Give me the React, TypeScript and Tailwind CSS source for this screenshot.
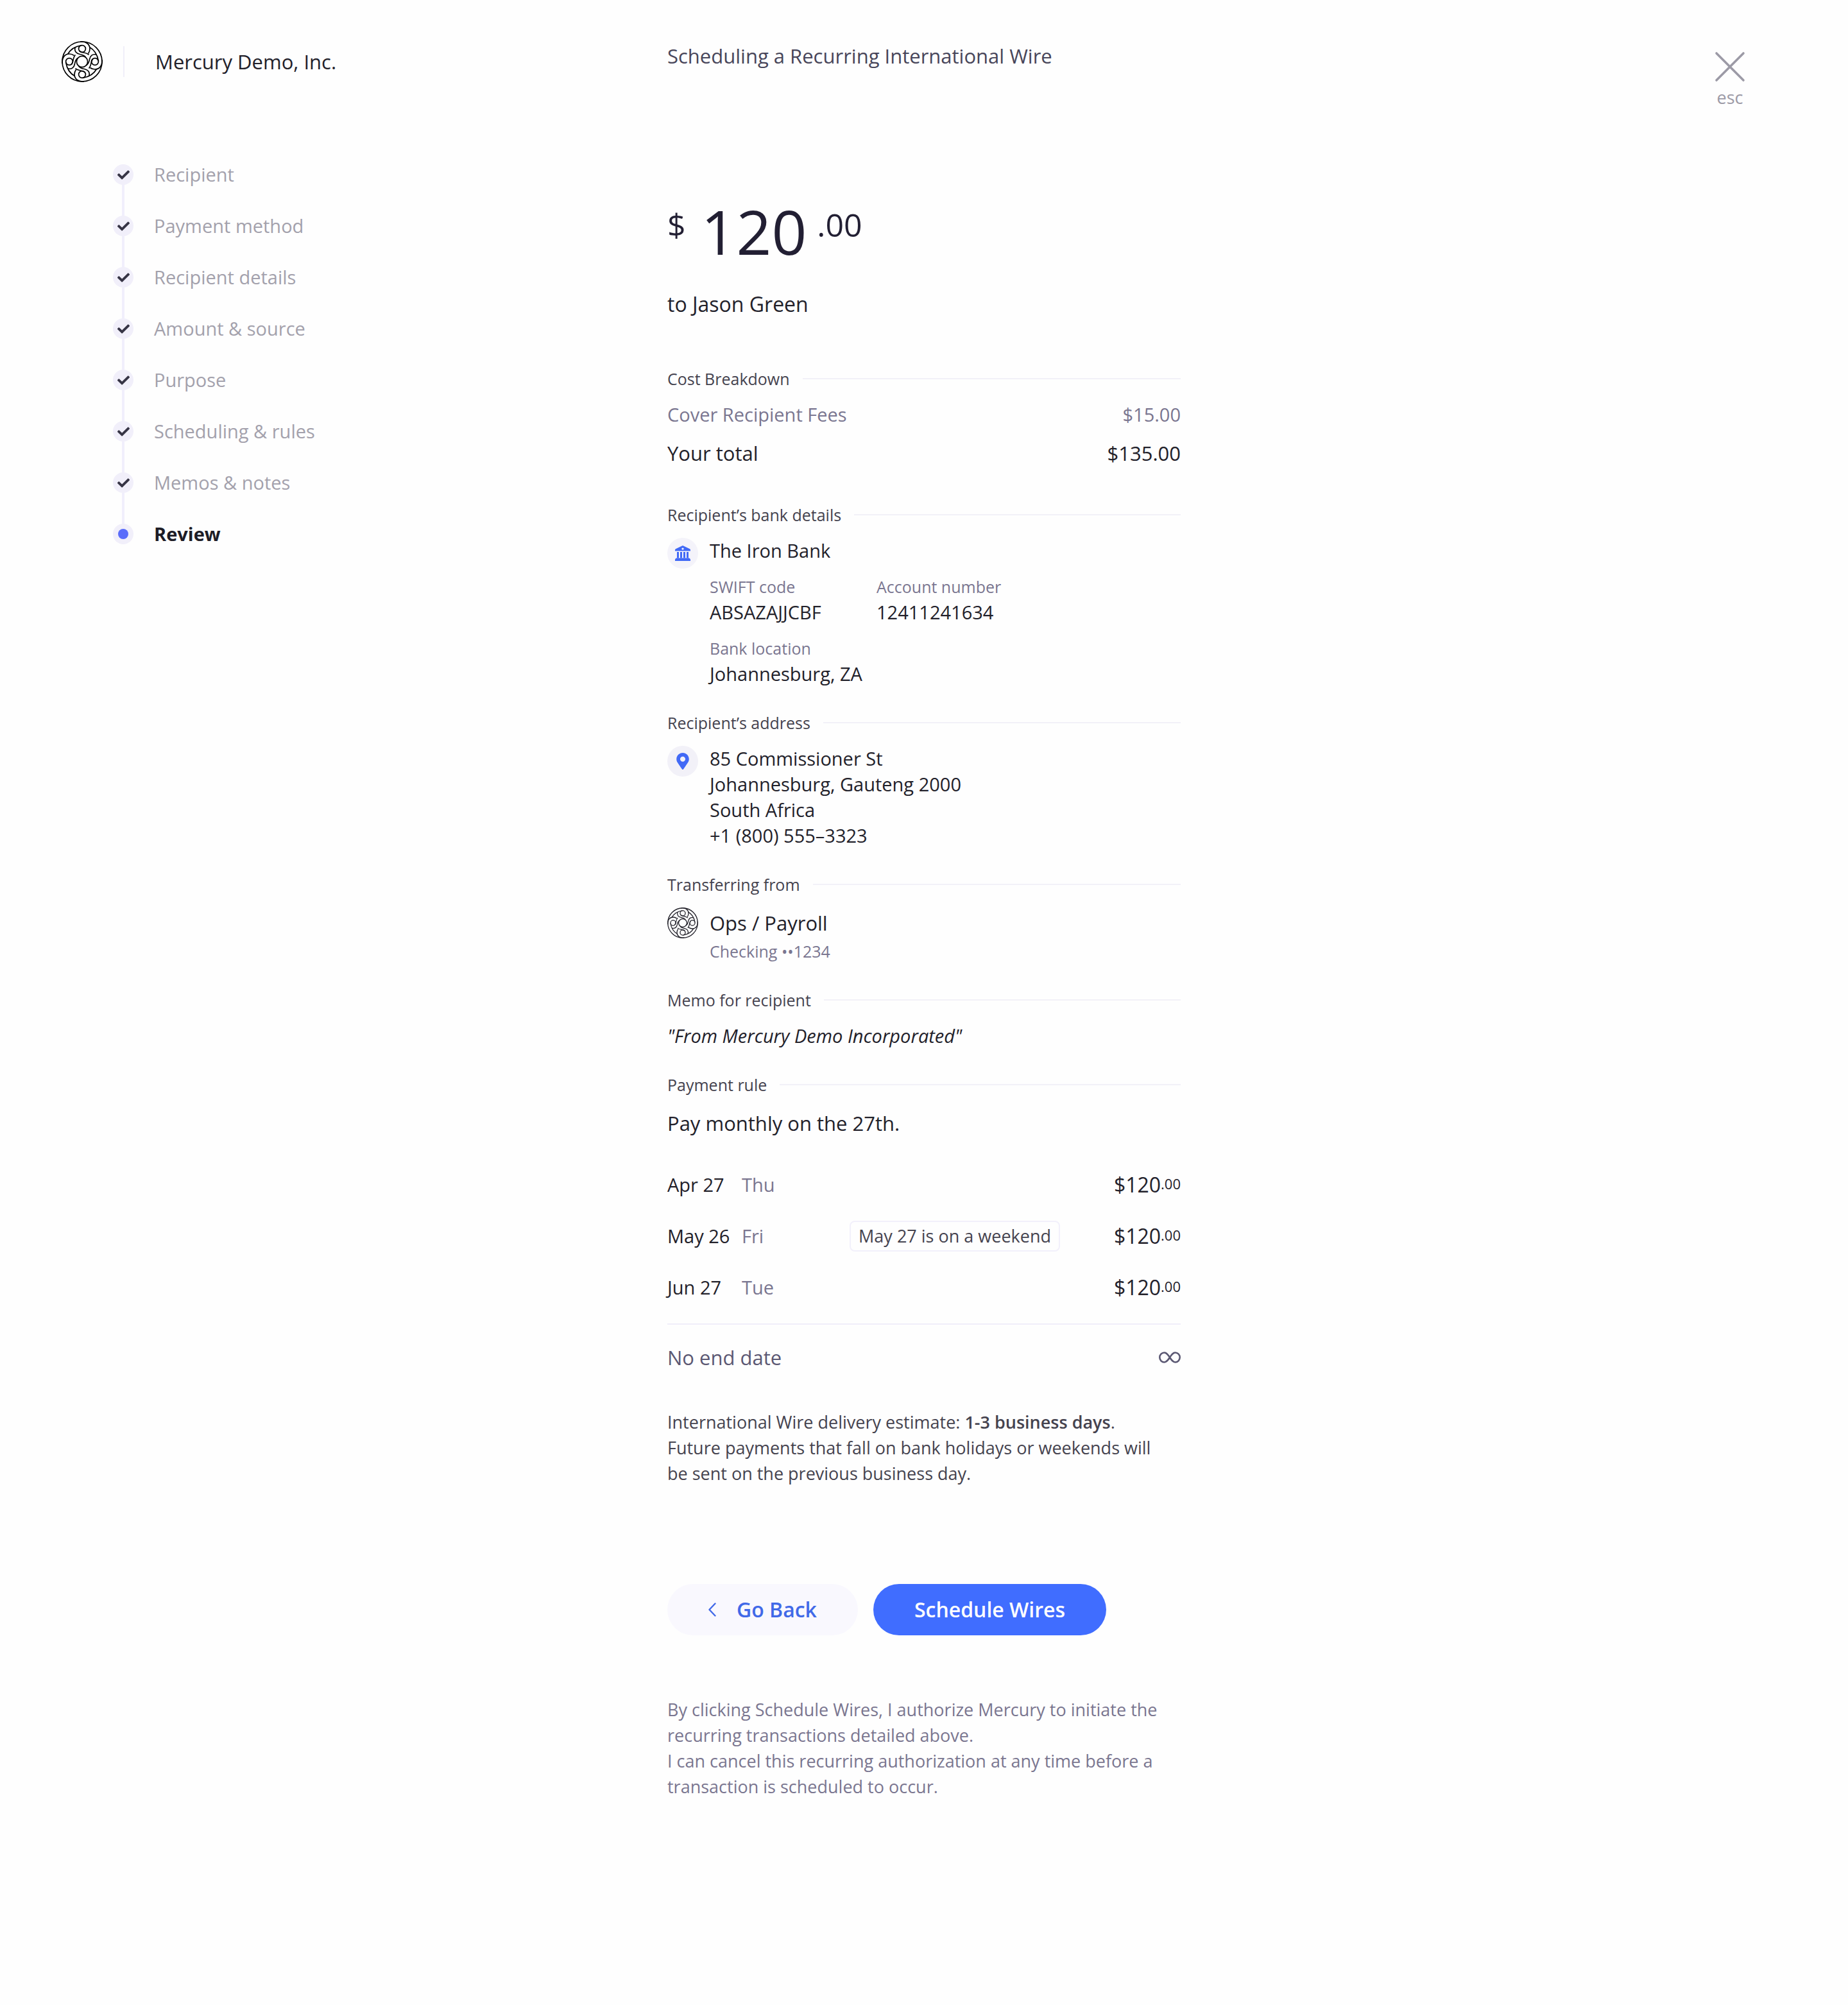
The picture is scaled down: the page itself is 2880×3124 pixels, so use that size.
import type { ReactNode } from "react";
import { FaCheck, FaMapMarkerAlt } from "react-icons/fa";

const STEPS = [
  "Recipient",
  "Payment method",
  "Recipient details",
  "Amount & source",
  "Purpose",
  "Scheduling & rules",
  "Memos & notes",
  "Review",
];

const PAYMENTS = [
  { date: "Apr 27", day: "Thu", note: "" },
  { date: "May 26", day: "Fri", note: "May 27 is on a weekend" },
  { date: "Jun 27", day: "Tue", note: "" },
];

/** Interlaced knot, one strand drawn four times around the centre. */
function Logo({ className }: { className: string }) {
  return (
    <svg viewBox="-32 -32 64 64" fill="none" stroke="currentColor" strokeWidth="1.7" className={className} aria-hidden="true">
      <circle r="31" />
      <circle r="8.6" />
      {[0, 90, 180, 270].map((angle) => (
        <g key={angle} transform={`rotate(${angle})`}>
          <circle cy="-20" r="5.4" />
          <path d="M-3 -31C6 -32 12 -27 12 -20C12 -17 11 -14.5 9.5 -12.5" />
          <path d="M11.5 -22.5C18 -19 23.5 -12 25.4 -1" />
          <path d="M-10.8 -22.8C-12.5 -16 -9 -12.5 -3.5 -11.5C0 -11 3 -10 5.5 -7" />
          <path d="M-4.5 -17C-1 -13 6 -15 10.5 -10.5" />
        </g>
      ))}
    </svg>
  );
}

function BankIcon() {
  return (
    <svg viewBox="0 0 24 24" className="size-6" fill="currentColor" aria-hidden="true">
      <path fillRule="evenodd" d="M12 0L23 5.2Q24 6 24 7V8.5H0V7Q0 6 1 5.2ZM12 3.4A1.7 1.7 0 1 0 12 6.8A1.7 1.7 0 1 0 12 3.4Z" />
      <path d="M3 10H6V19.5H3ZM8 10H11V19.5H8ZM13 10H16V19.5H13ZM18 10H21V19.5H18Z" />
      <path d="M2 19.5H22Q24 20.5 24 22V24H0V22Q0 20.5 2 19.5Z" />
    </svg>
  );
}

function Section({ title, children }: { title: string; children: ReactNode }) {
  return (
    <section className="mt-9">
      <div className="mb-4 flex items-center gap-5">
        <h2 className="text-[25px] leading-10 text-[#45434f]">{title}</h2>
        <div className="h-[2px] flex-1 bg-[#f2f1f8]" />
      </div>
      {children}
    </section>
  );
}

function Field({ label, value }: { label: string; value: string }) {
  return (
    <div>
      <dt className="text-[25px] leading-10 text-[#7a7690]">{label}</dt>
      <dd className="leading-10">{value}</dd>
    </div>
  );
}

function StepList() {
  return (
    <ol className="mt-[124px] ml-20 text-[#a3a1ac]">
      {STEPS.map((step, i) => {
        const current = i === STEPS.length - 1;
        return (
          <li key={step} className="flex h-20 gap-8" aria-current={current ? "step" : undefined}>
            <div className="flex w-8 flex-col items-center">
              <span className="mt-1 flex size-8 shrink-0 items-center justify-center rounded-full bg-[#f1effa]">
                {current ? (
                  <span className="size-4 rounded-full bg-[#5a6cfa]" />
                ) : (
                  <FaCheck className="size-[19px] text-[#363445]" />
                )}
              </span>
              {!current && <span className="-mb-1 w-1 flex-1 bg-[#f1effc]" />}
            </div>
            <span className={current ? "leading-10 font-bold text-[#1d1c26]" : "leading-10"}>{step}</span>
          </li>
        );
      })}
    </ol>
  );
}

export default function App() {
  return (
    <div className="grid min-h-screen grid-cols-[1fr_minmax(0,800px)_1fr] bg-[#fefefe] pb-[320px] font-['Open_Sans','Lato',sans-serif] text-[29px] text-[#22212a]">
      <aside className="pt-16 pl-24">
        <div className="flex h-16 items-center">
          <Logo className="size-16 text-black" />
          <div className="ml-8 h-12 w-[2px] bg-[#f0eff9]" />
          <span className="ml-12 text-[31px]">Mercury Demo, Inc.</span>
        </div>
        <nav aria-label="Progress">
          <StepList />
        </nav>
      </aside>

      <main className="pt-[67px]">
        <h1 className="text-[31px] leading-10 text-[#48465a]">Scheduling a Recurring International Wire</h1>

        <div className="mt-[205px] flex items-start text-[#221f33]">
          <span className="mt-[10px] text-[50px] leading-14">$</span>
          <span className="ml-6 text-[96px] leading-24 font-medium">120</span>
          <span className="mt-[10px] ml-4 text-[50px] leading-14">.00</span>
        </div>
        <p className="mt-[46px] mb-[76px] text-[32px] leading-10">to Jason Green</p>

        <Section title="Cost Breakdown">
          <dl className="mb-14 flex flex-col gap-5 leading-10">
            <div className="flex justify-between text-[#7a7690]">
              <dt>Cover Recipient Fees</dt>
              <dd>$15.00</dd>
            </div>
            <div className="flex justify-between text-[31px]">
              <dt>Your total</dt>
              <dd>$135.00</dd>
            </div>
          </dl>
        </Section>

        <Section title="Recipient’s bank details">
          <div className="flex gap-[18px]">
            <span className="flex size-12 items-center justify-center rounded-full bg-[#f4f3fa] text-[#4169f6]">
              <BankIcon />
            </span>
            <div>
              <p className="leading-10">The Iron Bank</p>
              <dl className="mt-4 grid grid-cols-[200px_auto] gap-x-15 gap-y-4">
                <Field label="SWIFT code" value="ABSAZAJJCBF" />
                <Field label="Account number" value="12411241634" />
                <div className="col-span-2">
                  <Field label="Bank location" value="Johannesburg, ZA" />
                </div>
              </dl>
            </div>
          </div>
        </Section>

        <Section title="Recipient’s address">
          <div className="flex gap-[18px]">
            <span className="flex size-12 items-center justify-center rounded-full bg-[#f2f1f8] text-[#4169f6]">
              <FaMapMarkerAlt className="size-[26px]" />
            </span>
            <address className="leading-10 not-italic">
              85 Commissioner St
              <br />
              Johannesburg, Gauteng 2000
              <br />
              South Africa
              <br />
              +1 (800) 555–3323
            </address>
          </div>
        </Section>

        <Section title="Transferring from">
          <div className="flex gap-[18px]">
            <Logo className="size-12" />
            <div>
              <p className="text-[31px] leading-12">Ops / Payroll</p>
              <p className="text-[25px] leading-10 text-[#7a7690]">Checking ••1234</p>
            </div>
          </div>
        </Section>

        <Section title="Memo for recipient">
          <p className="leading-10 italic">"From Mercury Demo Incorporated"</p>
        </Section>

        <Section title="Payment rule">
          <p className="text-[31px] leading-12">Pay monthly on the 27th.</p>
          <table className="mt-8 w-full">
            <tbody>
              {PAYMENTS.map(({ date, day, note }) => (
                <tr key={date} className="h-20">
                  <td className="w-[116px]">{date}</td>
                  <td className="text-[#7a7690]">{day}</td>
                  <td className="text-right">
                    {note && (
                      <span className="inline-block h-12 rounded-lg border-2 border-[#f2f0fb] px-3 text-[27px] leading-11 text-[#45434f]">
                        {note}
                      </span>
                    )}
                  </td>
                  <td className="w-[188px]">
                    <div className="flex items-start justify-end text-[32px] leading-10">
                      $120<span className="text-[22px] leading-9">.00</span>
                    </div>
                  </td>
                </tr>
              ))}
            </tbody>
          </table>
        </Section>

        <div className="mt-4 flex h-[104px] items-center justify-between border-t-2 border-[#f0eefa] text-[31px] text-[#5b5873]">
          <span>No end date</span>
          <svg viewBox="0 0 34 18" className="h-[18px] w-[34px]" fill="none" stroke="currentColor" strokeWidth="2.6" role="img" aria-label="Forever">
            <path d="M17 9C14 4.5 12 1.5 8.5 1.5A7.2 7.5 0 0 0 8.5 16.5C12 16.5 14 13.5 17 9C20 4.5 22 1.5 25.5 1.5A7.2 7.5 0 0 1 25.5 16.5C22 16.5 20 13.5 17 9Z" />
          </svg>
        </div>

        <p className="mt-[30px] max-w-[780px] text-[27px] leading-10 text-[#45434f]">
          International Wire delivery estimate: <strong className="font-semibold">1-3 business days</strong>.
          <br />
          Future payments that fall on bank holidays or weekends will be sent on the previous business day.
        </p>

        <div className="mt-[152px] flex gap-6 text-[32px] font-semibold">
          <button type="button" className="flex h-20 items-center gap-8 rounded-full bg-[#f9f8fe] px-16 text-[#4169e8]">
            <svg viewBox="0 0 12 22" className="h-[22px] w-3" fill="none" stroke="currentColor" strokeWidth="2.4" strokeLinecap="round" strokeLinejoin="round" aria-hidden="true">
              <path d="M10.5 1.5L1.5 11L10.5 20.5" />
            </svg>
            Go Back
          </button>
          <button type="button" className="h-20 rounded-full bg-[#406dff] px-16 text-white">
            Schedule Wires
          </button>
        </div>

        <p className="mt-24 text-[27px] leading-10 text-[#7a7690]">
          By clicking Schedule Wires, I authorize Mercury to initiate the recurring transactions detailed above.
          <br />I can cancel this recurring authorization at any time before a transaction is scheduled to occur.
        </p>
      </main>

      <div className="flex items-start justify-end pt-20 pr-40">
        <button type="button" className="flex w-12 flex-col items-center text-[27px] leading-12 text-[#9c9aa6]">
          <svg viewBox="0 0 48 48" className="size-12" stroke="currentColor" strokeWidth="3.6" strokeLinecap="round" aria-hidden="true">
            <path d="M3 3L45 45M45 3L3 45" />
          </svg>
          esc
        </button>
      </div>
    </div>
  );
}
